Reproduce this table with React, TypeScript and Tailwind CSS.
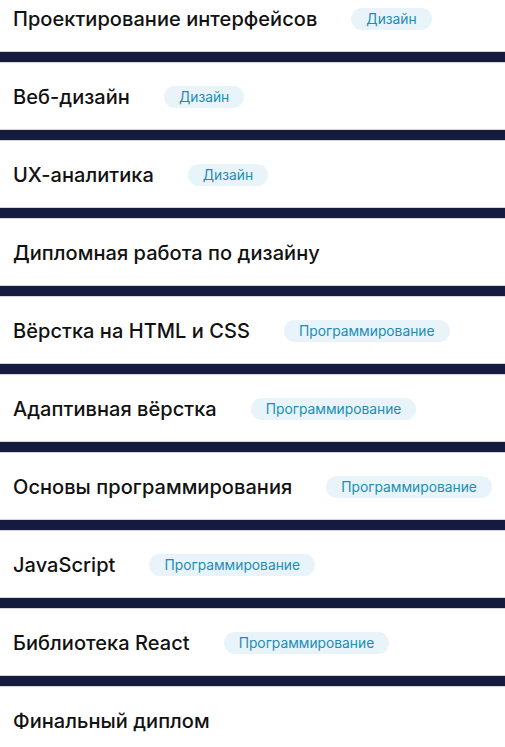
const courses = [
  { title: "Проектирование интерфейсов", tag: "Дизайн" },
  { title: "Веб-дизайн", tag: "Дизайн" },
  { title: "UX-аналитика", tag: "Дизайн" },
  { title: "Дипломная работа по дизайну" },
  { title: "Вёрстка на HTML и CSS", tag: "Программирование" },
  { title: "Адаптивная вёрстка", tag: "Программирование" },
  { title: "Основы программирования", tag: "Программирование" },
  { title: "JavaScript", tag: "Программирование" },
  { title: "Библиотека React", tag: "Программирование" },
  { title: "Финальный диплом" },
]

export default function App() {
  return (
    <div className="h-[747px] w-[505px] overflow-hidden bg-[#141b3e] font-['Inter','Noto_Sans',sans-serif]">
      <div className="-mt-[16px] flex flex-col gap-[10px]">
        {courses.map((course) => (
          <div
            key={course.title}
            className="flex h-[68px] items-center gap-[34px] whitespace-nowrap border-y border-[#d4d6dc] bg-white px-[13px] pt-[2px]"
          >
            <span className="shrink-0 text-[20px] font-medium tracking-[0.05px] text-[#111111]">
              {course.title}
            </span>
            {course.tag && (
              <span className="shrink-0 rounded-full bg-[#e8f4f9] px-[15px] py-[3px] text-[13.8px] leading-[16px] text-[#1d8db6]">
                {course.tag}
              </span>
            )}
          </div>
        ))}
      </div>
    </div>
  )
}
